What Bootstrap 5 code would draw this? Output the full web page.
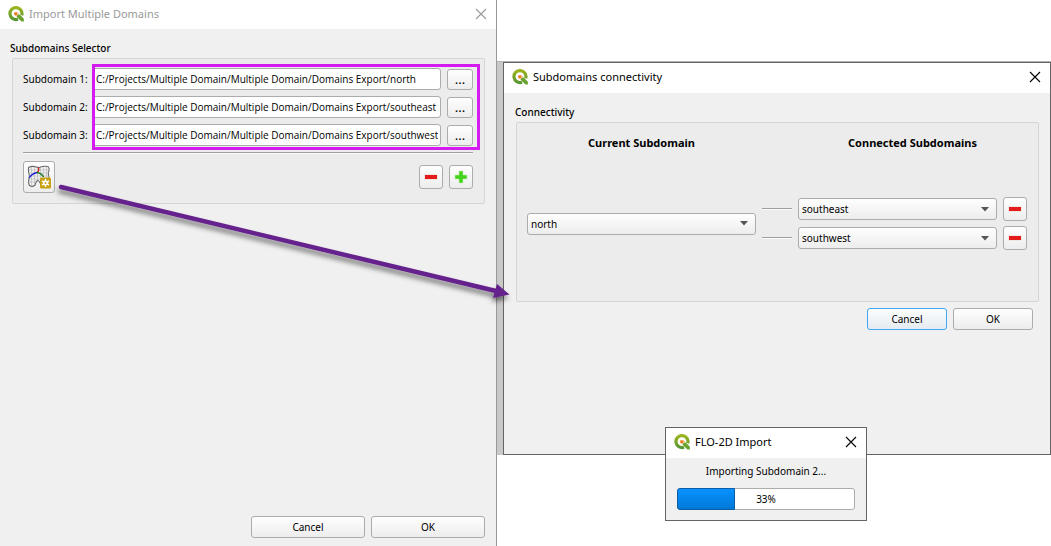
<!DOCTYPE html>
<html lang="en">
<head>
<meta charset="utf-8">
<meta name="viewport" content="width=device-width, initial-scale=1">
<title>Import Multiple Domains</title>
<link href="https://cdn.jsdelivr.net/npm/bootstrap@5.3.0/dist/css/bootstrap.min.css" rel="stylesheet">
<style>
  body { font: 10px/16px "Noto Sans", "Open Sans", sans-serif; color: #000; background: #fff; }
  .desktop { display: grid; grid-template-columns: 497fr 554fr; min-height: 100vh; }
  .win { background: #f0f0f0; }
  .win-main { border-right: 1px solid #999; }
  .win-dialog { border: 1px solid #646464; }
  .titlebar { background: #fff; height: 30px; padding: 0 8px; gap: 5px; }
  .win-main .titlebar { height: 29px; color: #999; }
  .titlebar h1, .titlebar h2 { font-size: 11px; line-height: 16px; font-weight: 400; margin: 0 0 2px; }
  .btn-x { border: 0; background: none; padding: 0; width: 14px; height: 14px; line-height: 0; color: inherit; margin-bottom: 2px; }
  .logo { width: 16px; height: 16px; flex: none; margin-bottom: 2px; }
  .main-body { padding: 11px 11px 8px 10px; }
  .dialog-body { padding: 11px 11px 124px; }
  .group { background: #ececec; border: 1px solid #d5d5d5; border-radius: 2px; }
  .group-main { margin: 2px 0 0 2px; padding: 6px 11px 10px 10px; }
  .group-dialog { margin: 2px 0 6px 1px; padding: 10px 11px 51px 10px; }
  .group-name { font-size: 10px; line-height: 16px; margin: 0; }
  .gap-six { gap: 6px; }
  .qbtn, .qselect, .qinput { font-size: 10px; line-height: 14px; border: 1px solid #acacac; border-radius: 3px; color: #000; padding: 0; }
  .qbtn { background: linear-gradient(#fefefe, #ededed); height: 22px; }
  .qbtn:hover { background: #f7f7f7; border-color: #999; }
  .qbtn-focus, .qbtn-focus:hover { border-color: #3fa9f5; background: linear-gradient(#fcfdfe, #e4ebf1); }
  .qbtn-sq { width: 24px; height: 24px; line-height: 0; flex: none; }
  .qbtn-tool { width: 32px; height: 32px; line-height: 0; }
  .qbtn-dots { width: 26px; height: 21px; flex: none; font-size: 13px; }
  .qinput { background: #fff; height: 22px; padding: 0 2px 0 3px; min-width: 0; font-family: "Open Sans", "Noto Sans", sans-serif; }
  .path-row { height: 28px; }
  .path-row label { width: 69px; flex: none; white-space: nowrap; }
  .path-row .qbtn { margin-left: 6px; }
  .marked { position: absolute; top: -1px; bottom: -1px; left: 69px; right: -7px; border: 3px solid #d41cf0; pointer-events: none; }
  .rule { border-top: 1px solid #9e9e9e; border-bottom: 1px solid #fbfbfb; height: 2px; }
  .group-main > .rule { margin: 3px 0 7px; }
  .backdrop { background: #c9c9c9; border-top: 1px solid #b4b4b4; padding-left: 6px; margin-top: 61px; }
  .links { display: grid; grid-template-columns: 229fr 30px 199fr 24px; column-gap: 6px; row-gap: 5px; align-items: center; padding-top: 44px; }
  .links > .from { grid-row: 1 / span 2; }
  .qselect { height: 22px; width: 100%; padding: 0 20px 0 3px; appearance: none;
    background: url("data:image/svg+xml,%3Csvg xmlns='http://www.w3.org/2000/svg' width='8' height='5'%3E%3Cpath d='M0 0h8L4 4.500z' fill='%23555'/%3E%3C/svg%3E") no-repeat right 7px center, linear-gradient(#fefefe, #ededed); }
  .heads { display: grid; grid-template-columns: 229fr 30px 229fr; column-gap: 6px; font-size: 11px; font-weight: 700; text-align: center; line-height: 20px; }
  .win-progress { position: absolute; left: 168px; top: 427px; width: 202px; z-index: 2; }
  .progress-body { padding: 5px 11px 10px; }
  .qprogress { position: relative; height: 22px; margin-top: 9px; background: #fff; border: 1px solid #acacac; border-radius: 3px; }
  .qprogress-fill { position: absolute; left: -1px; top: -1px; bottom: -1px; background: linear-gradient(#0a91ff, #0078d7); border: 1px solid #0a5ea5; border-radius: 3px 0 0 3px; }
  .qprogress span { position: relative; line-height: 20px; }
  .pointer { position: absolute; left: 0; top: 0; width: 100%; pointer-events: none; z-index: 1; }
  .foot-main .qbtn { width: 114px; }
  .foot-dialog { padding-right: 6px; }
  .foot-dialog .qbtn { width: 80px; }
</style>
</head>
<body>
<svg width="0" height="0" class="position-absolute" aria-hidden="true">
  <linearGradient id="ring" x2="0" y2="1"><stop offset="0" stop-color="#9bb51f"/><stop offset="1" stop-color="#589632"/></linearGradient>
  <symbol id="qlogo" viewBox="0 0 16 16">
    <path d="M10 13.200A6 6 0 1 1 13.700 9.300" fill="none" stroke="url(#ring)" stroke-width="3.200"/>
    <path d="M8.700 8.500h3L15.900 12.800V15.500H13.500L8.700 11z" fill="#6aa22f"/>
    <path d="M6 6h3.600l1.600 1.600-3 3L6 9z" fill="#f6c9a5"/>
    <circle cx="7.800" cy="7.800" r="1.500" fill="#ee7913"/>
  </symbol>
  <symbol id="cross" viewBox="0 0 14 14"><path d="M2 2l10 10M12 2L2 12" stroke="currentColor" stroke-width="1.100" fill="none"/></symbol>
  <symbol id="minus" viewBox="0 0 14 14"><path d="M.5 4.500h13v5H.5z" fill="#e8d9cf"/><path d="M1 5h12v4H1z" fill="#e31b1b"/></symbol>
  <symbol id="plus" viewBox="0 0 14 14"><path d="M5 1h4v4h4v4H9v4H5V9H1V5h4z" fill="#43d31c" stroke="#c4ecb4" stroke-width=".6"/></symbol>
</svg>

<main class="desktop position-relative">
  <section class="win win-main d-flex flex-column" aria-label="Import Multiple Domains">
    <header class="titlebar d-flex align-items-center">
      <svg class="logo"><use href="#qlogo"/></svg>
      <h1>Import Multiple Domains</h1>
      <button class="btn-x ms-auto" aria-label="Close"><svg width="14" height="14"><use href="#cross"/></svg></button>
    </header>
    <div class="main-body d-flex flex-column flex-grow-1">
      <h2 class="group-name">Subdomains Selector</h2>
      <div class="group group-main">
        <div class="position-relative">
          <div class="path-row d-flex align-items-center"><label for="p1">Subdomain 1:</label><input class="qinput flex-grow-1" id="p1" value="C:/Projects/Multiple Domain/Multiple Domain/Domains Export/north"><button class="qbtn qbtn-dots">...</button></div>
          <div class="path-row d-flex align-items-center"><label for="p2">Subdomain 2:</label><input class="qinput flex-grow-1" id="p2" value="C:/Projects/Multiple Domain/Multiple Domain/Domains Export/southeast"><button class="qbtn qbtn-dots">...</button></div>
          <div class="path-row d-flex align-items-center"><label for="p3">Subdomain 3:</label><input class="qinput flex-grow-1" id="p3" value="C:/Projects/Multiple Domain/Multiple Domain/Domains Export/southwest"><button class="qbtn qbtn-dots">...</button></div>
          <div class="marked"></div>
        </div>
        <div class="rule"></div>
        <div class="gap-six d-flex align-items-center">
          <button class="qbtn qbtn-tool" aria-label="Connect subdomains">
            <svg width="24" height="24" viewBox="0 0 24 24">
              <path d="M1.500 2.500Q5 .5 9.500 2Q11.500 3 13 2.200Q16 .8 21 1.500Q23 4 21.500 7Q21 10 22.500 14V20H14Q12 15 10.500 15.500Q9 16.500 8 20Q5.500 22.500 2.500 20.500Q1 18 2 14Q3 10 1.500 7z" fill="#f1f1f1" stroke="#6a6a6a" stroke-width="1.100"/>
              <path d="M4.500 2v19M7.500 2v18M10.500 3v12M13.500 3v14M16.500 2v15M19.500 2v15M2 5h20M2 8h20M2 11h20M2 14h20M2 17h7" stroke="#b4b4b4" stroke-width=".6"/>
              <path d="M2 13Q5 8.500 10 7.500" stroke="#1a1ad0" stroke-width="1.300" fill="none"/>
              <path d="M10 7.500Q12.500 6 11.500 2.500" stroke="#d01a1a" stroke-width="1.300" fill="none"/>
              <path d="M10 7.500Q15 8.500 16.500 12" stroke="#147a20" stroke-width="1.300" fill="none"/>
              <rect x="13" y="12.500" width="11" height="11" rx="1.500" fill="#c9a010"/>
              <path d="M18.500 14v8M15 16l7 4M22 16l-7 4" stroke="#fff" stroke-width="1.500"/>
              <circle cx="18.500" cy="18" r="2.400" fill="#fff"/><circle cx="18.500" cy="18" r="1" fill="#c9a010"/>
            </svg>
          </button>
          <button class="qbtn qbtn-sq ms-auto" aria-label="Remove subdomain"><svg width="14" height="14"><use href="#minus"/></svg></button>
          <button class="qbtn qbtn-sq" aria-label="Add subdomain"><svg width="14" height="14"><use href="#plus"/></svg></button>
        </div>
      </div>
      <footer class="foot-main gap-six d-flex justify-content-end mt-auto">
        <button class="qbtn">Cancel</button>
        <button class="qbtn">OK</button>
      </footer>
    </div>
  </section>

  <div class="position-relative">
    <div class="backdrop">
      <section class="win win-dialog" aria-label="Subdomains connectivity">
        <header class="titlebar d-flex align-items-center">
          <svg class="logo"><use href="#qlogo"/></svg>
          <h2>Subdomains connectivity</h2>
          <button class="btn-x ms-auto" aria-label="Close"><svg width="14" height="14"><use href="#cross"/></svg></button>
        </header>
        <div class="dialog-body">
          <h3 class="group-name">Connectivity</h3>
          <div class="group group-dialog">
            <div class="heads"><div>Current Subdomain</div><div></div><div>Connected Subdomains</div></div>
            <div class="links">
              <select class="qselect from" aria-label="Current subdomain"><option>north</option></select>
              <div class="rule"></div>
              <select class="qselect" aria-label="Connected subdomain 1"><option>southeast</option></select>
              <button class="qbtn qbtn-sq" aria-label="Remove southeast"><svg width="14" height="14"><use href="#minus"/></svg></button>
              <div class="rule"></div>
              <select class="qselect" aria-label="Connected subdomain 2"><option>southwest</option></select>
              <button class="qbtn qbtn-sq" aria-label="Remove southwest"><svg width="14" height="14"><use href="#minus"/></svg></button>
            </div>
          </div>
          <footer class="foot-dialog gap-six d-flex justify-content-end">
            <button class="qbtn qbtn-focus">Cancel</button>
            <button class="qbtn">OK</button>
          </footer>
        </div>
      </section>
    </div>

    <section class="win win-dialog win-progress" aria-label="FLO-2D Import">
      <header class="titlebar d-flex align-items-center">
        <svg class="logo"><use href="#qlogo"/></svg>
        <h2>FLO-2D Import</h2>
        <button class="btn-x ms-auto" aria-label="Close"><svg width="14" height="14"><use href="#cross"/></svg></button>
      </header>
      <div class="progress-body text-center">
        <div>Importing Subdomain 2...</div>
        <div class="qprogress" role="progressbar" aria-valuenow="33" aria-valuemin="0" aria-valuemax="100" aria-label="Import progress">
          <div class="qprogress-fill" style="width:33%"></div>
          <span>33%</span>
        </div>
      </div>
    </section>
  </div>

  <svg class="pointer" viewBox="0 0 1051 546" aria-hidden="true">
    <defs><filter id="soft" x="-10%" y="-20%" width="120%" height="150%"><feDropShadow dx="-1" dy="4" stdDeviation="2.500" flood-color="#000" flood-opacity=".5"/></filter></defs>
    <g filter="url(#soft)" fill="#65208c">
      <path d="M61 187L496 291" stroke="#65208c" stroke-width="4.500" stroke-linecap="round"/>
      <path d="M497 284L509.500 294.500L493 298z"/>
    </g>
  </svg>
</main>
<script src="https://cdn.jsdelivr.net/npm/bootstrap@5.3.0/dist/js/bootstrap.bundle.min.js"></script>
<script>
  // Long paths show their last folder, as after typing.
  document.querySelectorAll('.qinput').forEach(el => { el.scrollLeft = el.scrollWidth; });
</script>
</body>
</html>
